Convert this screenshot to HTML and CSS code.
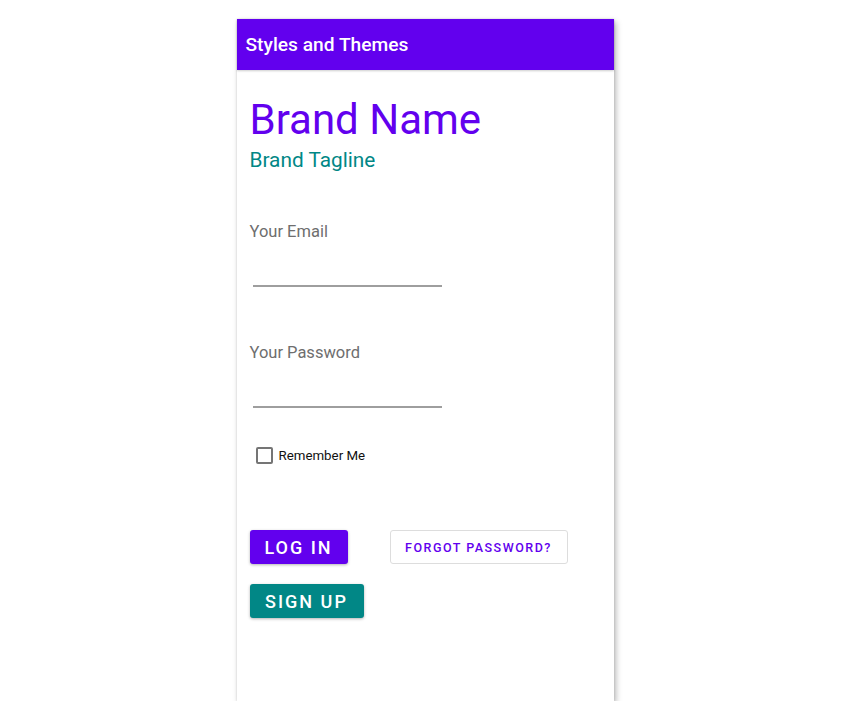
FILE: index.html
```html
<!DOCTYPE html>
<html>
<head>
<meta charset="utf-8">
<link rel="stylesheet" href="styles.css">
</head>
<body>
<div class="phone">
  <header class="appbar">Styles and Themes</header>
  <main class="content">
    <h1 class="brand">Brand Name</h1>
    <p class="tagline">Brand Tagline</p>
    <div class="field">
      <label class="label">Your Email</label>
      <div class="line"></div>
    </div>
    <div class="field">
      <label class="label">Your Password</label>
      <div class="line"></div>
    </div>
    <div class="remember">
      <span class="box"></span>
      <span class="remember-text">Remember Me</span>
    </div>
    <div class="row">
      <button class="btn primary">LOG IN</button>
      <button class="btn outline">FORGOT PASSWORD?</button>
    </div>
    <div class="row second">
      <button class="btn teal">SIGN UP</button>
    </div>
  </main>
</div>
</body>
</html>
```
FILE: styles.css
```css
html, body {
  margin: 0;
  padding: 0;
  background: #ffffff;
  font-family: Roboto, "Liberation Sans", sans-serif;
}
.phone {
  width: 377px;
  height: 682px;
  margin: 19px auto 0;
  background: #ffffff;
  box-shadow: 2px 3px 6px rgba(0,0,0,0.28), 0 0 2px rgba(0,0,0,0.12);
  display: flex;
  flex-direction: column;
}
.appbar {
  height: 51px;
  background: #6200ee;
  color: #ffffff;
  font-size: 19.2px;
  font-weight: 500;
  line-height: 51px;
  padding-left: 9px;
  box-shadow: 0 1px 2px rgba(0,0,0,0.2);
}
.content {
  padding: 0 13px;
  display: flex;
  flex-direction: column;
}
.brand {
  margin: 24px 0 0;
  font-size: 42px;
  font-weight: 400;
  color: #6200ee;
  line-height: 52px;
}
.tagline {
  margin: 0;
  font-size: 20.8px;
  color: #018786;
  line-height: 28px;
}
.field {
  display: flex;
  flex-direction: column;
}
.label {
  margin-top: 48px;
  font-size: 16.5px;
  color: #6e6e6e;
  line-height: 20px;
}
.field + .field .label {
  margin-top: 56px;
}
.line {
  margin-top: 43px;
  margin-left: 3px;
  width: 189px;
  height: 2px;
  background: #9e9e9e;
}
.remember {
  margin-top: 39px;
  display: flex;
  align-items: center;
  padding-left: 6px;
}
.box {
  width: 13px;
  height: 13px;
  border: 2px solid #757575;
  border-radius: 2px;
}
.remember-text {
  margin-left: 6px;
  font-size: 13.3px;
  color: #111111;
}
.row {
  display: flex;
  gap: 42px;
  margin-top: 66px;
}
.row.second {
  margin-top: 20px;
}
.btn {
  height: 34px;
  border: none;
  border-radius: 3px;
  font-family: Roboto, "Liberation Sans", sans-serif;
  font-weight: 500;
  cursor: pointer;
  padding: 0;
}
.primary {
  width: 98px;
  background: #6200ee;
  color: #ffffff;
  font-size: 18px;
  letter-spacing: 2px;
  box-shadow: 0 1px 3px rgba(0,0,0,0.3);
}
.teal {
  width: 114px;
  background: #018786;
  color: #ffffff;
  font-size: 18px;
  letter-spacing: 2px;
  box-shadow: 0 1px 3px rgba(0,0,0,0.3);
}
.outline {
  width: 178px;
  background: #ffffff;
  color: #6200ee;
  border: 1px solid #dddddd;
  font-size: 12.5px;
  letter-spacing: 1.5px;
}
```
